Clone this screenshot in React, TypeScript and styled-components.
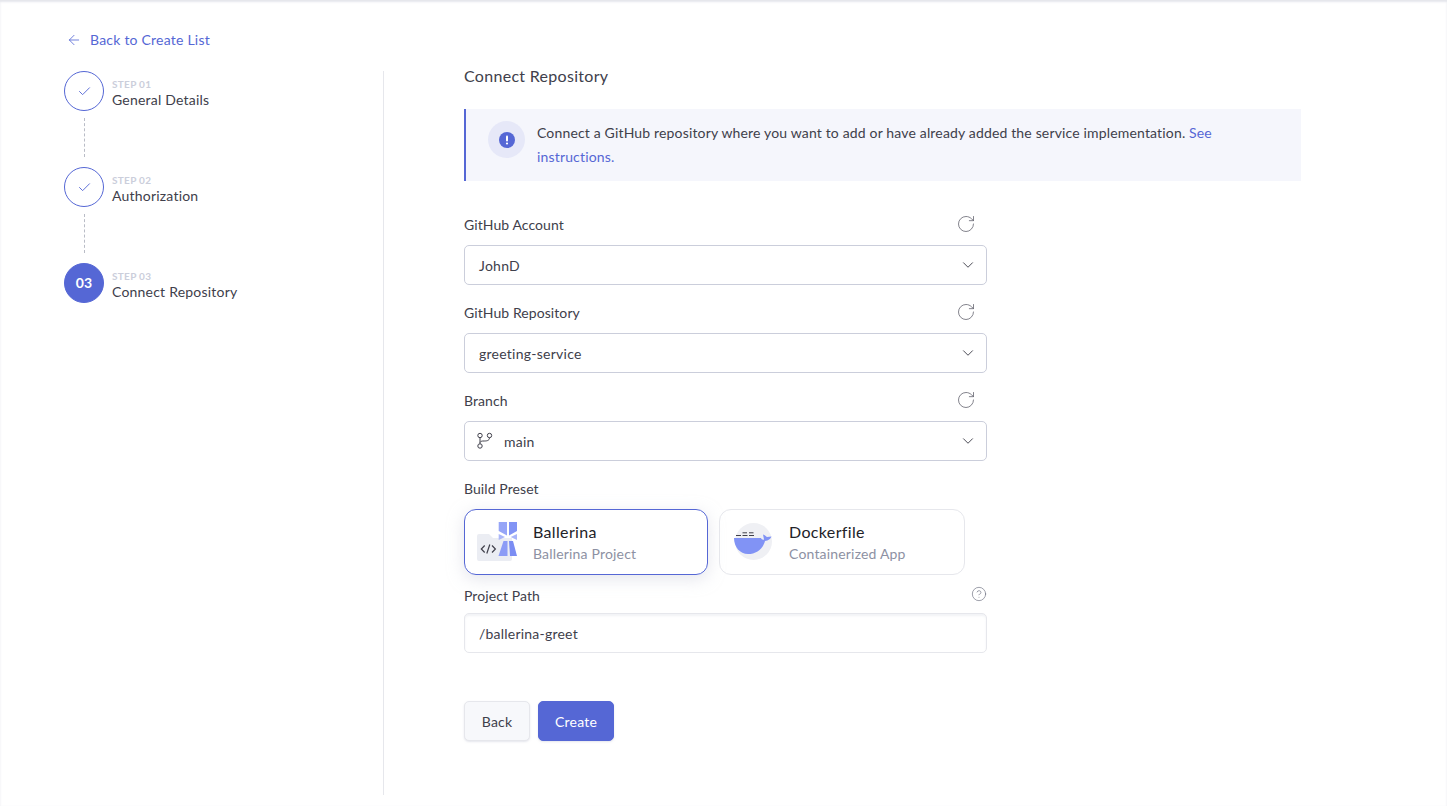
import React from 'react';
import styled, { createGlobalStyle } from 'styled-components';
import { ArrowLeft, Check, ChevronDown, RotateCw, CircleHelp } from 'lucide-react';

const GlobalStyle = createGlobalStyle`
  * { box-sizing: border-box; }
  html, body { margin: 0; padding: 0; background: #fff; }
  body {
    font-family: Lato, "Open Sans", "Liberation Sans", sans-serif;
    color: #40404b;
    height: 806px;
    overflow: hidden;
    letter-spacing: 0.18px;
  }
`;

const Page = styled.div`
  height: 806px;
  border-top: 1px solid #e6e7ec;
  box-shadow: inset 0 1px 2px rgba(203, 206, 219, 0.5);
  padding: 29px 0 11px 64px;
  display: flex;
  flex-direction: column;
`;

const BackLink = styled.a`
  display: flex;
  align-items: center;
  gap: 8px;
  height: 20px;
  margin: 0 0 21px 2px;
  color: #5567d5;
  font-size: 14px;
  letter-spacing: 0.22px;
`;

const BackText = styled.span`
  padding-bottom: 2px;
`;

const Columns = styled.div`
  flex: 1;
  display: flex;
`;

const Sidebar = styled.aside`
  width: 320px;
  border-right: 1px solid #e6e7ec;
`;

const Step = styled.div`
  display: flex;
  gap: 8px;
  height: 40px;
`;

const Circle = styled.div<{ $active?: boolean }>`
  width: 40px;
  height: 40px;
  padding-bottom: ${(p) => (p.$active ? 2 : 0)}px;
  border-radius: 50%;
  border: 1px solid #5567d5;
  background: ${(p) => (p.$active ? '#5567d5' : '#fff')};
  color: ${(p) => (p.$active ? '#fff' : '#5567d5')};
  font-size: 14px;
  font-weight: 700;
  display: flex;
  align-items: center;
  justify-content: center;
`;

const StepText = styled.div`
  padding-top: 6px;
`;

const StepNo = styled.div`
  font-size: 10px;
  line-height: 14px;
  font-weight: 700;
  letter-spacing: 0.3px;
  color: #cbcedb;
`;

const StepName = styled.div`
  font-size: 14px;
  line-height: 18px;
  letter-spacing: 0.21px;
`;

const Connector = styled.div`
  width: 0;
  height: 39px;
  margin: 7px 0 10px 20px;
  border-left: 1px dashed #b9bcc6;
`;

const Main = styled.main`
  padding-left: 80px;
  width: 917px;
`;

const Title = styled.h2`
  margin: -3px 0 26px;
  font-size: 16px;
  line-height: 15px;
  font-weight: 400;
  letter-spacing: 0.3px;
  color: #40404b;
`;

const Alert = styled.div`
  display: flex;
  gap: 12px;
  height: 72px;
  padding: 12px 60px 0 22px;
  margin-bottom: 33px;
  background: #f5f6fc;
  border-left: 2px solid #5567d5;
`;

const AlertBadge = styled.div`
  flex: none;
  width: 37px;
  height: 37px;
  border-radius: 50%;
  background: #e6e8f8;
  display: flex;
  align-items: center;
  justify-content: center;
`;

const AlertText = styled.p`
  margin: 0;
  font-size: 14px;
  line-height: 24px;
  letter-spacing: 0.16px;
`;

const TextLink = styled.a`
  color: #5567d5;
`;

const Form = styled.div`
  width: 523px;
`;

const LabelRow = styled.div`
  display: flex;
  align-items: center;
  justify-content: space-between;
  height: 20px;
  padding-right: 11px;
  font-size: 14px;
  letter-spacing: 0.08px;
`;

const Field = styled.div`
  margin-bottom: 17px;
`;

const Select = styled.div`
  height: 40px;
  margin-top: 11px;
  display: flex;
  align-items: center;
  gap: 11px;
  padding: 0 9px 0 14px;
  border: 1px solid #cbcedb;
  border-radius: 5px;
  font-size: 14px;
  letter-spacing: 0.25px;
`;

const SelectValue = styled.span`
  flex: 1;
`;

const BranchSvg = styled.svg`
  flex: none;
  margin-left: -2px;
`;

const Cards = styled.div`
  display: flex;
  gap: 11px;
  margin-top: 11px;
  margin-bottom: 11px;
`;

const Card = styled.div<{ $selected?: boolean; $width: number; $inset: number }>`
  width: ${(p) => p.$width}px;
  height: 66px;
  display: flex;
  align-items: center;
  gap: 14px;
  padding-left: ${(p) => p.$inset}px;
  border-radius: 12px;
  border: 1px solid ${(p) => (p.$selected ? '#5567d5' : '#e6e7ec')};
  box-shadow: ${(p) => (p.$selected ? '0 4px 16px rgba(203, 206, 219, 0.5)' : 'none')};
`;

const CardBody = styled.div`
  padding-top: 2px;
`;

const CardTitle = styled.div`
  font-size: 16px;
  line-height: 22px;
  letter-spacing: 0.35px;
  color: #222228;
`;

const CardSub = styled.div`
  font-size: 14px;
  line-height: 22px;
  color: #8d91a3;
`;

const InputLabelRow = styled(LabelRow)`
  padding-right: 0;
  height: 18px;
`;

const HelpIcon = styled(CircleHelp)`
  align-self: flex-start;
`;

const Input = styled.div`
  height: 40px;
  margin-top: 9px;
  display: flex;
  align-items: center;
  padding: 0 14px;
  border: 1px solid #e6e7ec;
  border-radius: 5px;
  box-shadow: inset 0 2px 2px rgba(203, 206, 219, 0.25);
  font-size: 14px;
  letter-spacing: 0.22px;
`;

const Actions = styled.div`
  display: flex;
  gap: 8px;
  margin-top: 48px;
`;

const Button = styled.button<{ $primary?: boolean }>`
  height: 40px;
  width: ${(p) => (p.$primary ? 76 : 66)}px;
  font-family: inherit;
  font-size: 14px;
  letter-spacing: 0.2px;
  border-radius: 5px;
  border: 1px solid ${(p) => (p.$primary ? '#5567d5' : '#e6e7ec')};
  background: ${(p) => (p.$primary ? '#5567d5' : '#f7f8fb')};
  color: ${(p) => (p.$primary ? '#fff' : '#40404b')};
  box-shadow: 0 1px 2px rgba(203, 206, 219, 0.5);
`;

const steps = [
  { no: 'STEP 01', name: 'General Details', done: true },
  { no: 'STEP 02', name: 'Authorization', done: true },
  { no: 'STEP 03', name: 'Connect Repository', done: false },
];

const BranchIcon = () => (
  <BranchSvg width="16" height="18" viewBox="0 0 16 18" fill="none" stroke="#40404b" strokeWidth="1">
    <circle cx="3" cy="3.5" r="2.2" />
    <circle cx="12.5" cy="3.5" r="2.2" />
    <circle cx="3" cy="14" r="2.2" />
    <path d="M3 5.7v6.100M3 10.5c1-1.500 2-1.500 4-1.500s5.500 0 5.500-3.300" />
  </BranchSvg>
);

const BallerinaLogo = () => (
  <svg width="42" height="42" viewBox="0 0 42 42" fill="none">
    <path d="M0 15a2 2 0 0 1 2-2h10l4 4h19v21a2 2 0 0 1-2 2H2a2 2 0 0 1-2-2z" fill="#ebedf3" />
    <path d="M21.7 1H30v13.500l-8.300-4.500z" fill="#96a5f7" />
    <path d="M32 1h8v9l-8 4.500z" fill="#8294f5" />
    <path d="M21.700 13l6.300 3-6.300 3z" fill="#aab6f9" />
    <path d="M40 13v6l-6.300-3z" fill="#aab6f9" />
    <path d="M26.500 20h4v15h-9z" fill="#8c9cf6" />
    <path d="M32 20h4l4 15h-7z" fill="#7b8df3" />
    <path d="M7.700 24.500L4.300 28l3.400 3.500M15 24.500l3.400 3.500-3.400 3.500M12.800 23.500l-3 9" stroke="#40404b" strokeWidth="1.200" />
  </svg>
);

const DockerLogo = () => (
  <svg width="42" height="42" viewBox="0 0 42 42" fill="none">
    <circle cx="20.500" cy="20.500" r="18.500" fill="#eff0f4" />
    <path
      d="M1 17h27c.5 1.500 2 2 3 1.500l-1-5c2 .5 3 2 4 2.500 1.500 0 3-.5 4.500-.5-1 2.500-3 4-6.500 4.500C30 28 23 33 15 33 7 33 1 26 1 17z"
      fill="#8193f5"
    />
    <path d="M3 14.500h5M9.500 14.500h5M16 14.500h5M9.500 11.800h4.500M16 11.800h4.500" stroke="#40404b" strokeWidth="1" />
  </svg>
);

const RefreshIcon = () => <RotateCw size={20} strokeWidth={0.9} color="#5a5a66" />;

const Chevron = () => <ChevronDown size={18} strokeWidth={1.25} />;

export default function App() {
  return (
    <>
      <GlobalStyle />
      <Page>
        <BackLink>
          <ArrowLeft size={16} strokeWidth={1.25} />
          <BackText>Back to Create List</BackText>
        </BackLink>
        <Columns>
          <Sidebar>
            {steps.map((step, idx) => (
              <React.Fragment key={step.no}>
                <Step>
                  <Circle $active={!step.done}>
                    {step.done ? <Check size={15} strokeWidth={1.5} /> : '03'}
                  </Circle>
                  <StepText>
                    <StepNo>{step.no}</StepNo>
                    <StepName>{step.name}</StepName>
                  </StepText>
                </Step>
                {idx < steps.length - 1 && <Connector />}
              </React.Fragment>
            ))}
          </Sidebar>
          <Main>
            <Title>Connect Repository</Title>
            <Alert>
              <AlertBadge>
                <svg width="16" height="16" viewBox="0 0 16 16">
                  <circle cx="8" cy="8" r="8" fill="#5567d5" />
                  <rect x="7" y="3.500" width="2" height="6" rx="1" fill="#fff" />
                  <circle cx="8" cy="11.500" r="1.100" fill="#fff" />
                </svg>
              </AlertBadge>
              <AlertText>
                Connect a GitHub repository where you want to add or have already added the service implementation.{' '}
                <TextLink>See instructions.</TextLink>
              </AlertText>
            </Alert>
            <Form>
              <Field>
                <LabelRow>
                  GitHub Account
                  <RefreshIcon />
                </LabelRow>
                <Select>
                  <SelectValue>JohnD</SelectValue>
                  <Chevron />
                </Select>
              </Field>
              <Field>
                <LabelRow>
                  GitHub Repository
                  <RefreshIcon />
                </LabelRow>
                <Select>
                  <SelectValue>greeting-service</SelectValue>
                  <Chevron />
                </Select>
              </Field>
              <Field>
                <LabelRow>
                  Branch
                  <RefreshIcon />
                </LabelRow>
                <Select>
                  <BranchIcon />
                  <SelectValue>main</SelectValue>
                  <Chevron />
                </Select>
              </Field>
              <LabelRow>Build Preset</LabelRow>
              <Cards>
                <Card $selected $width={244} $inset={12}>
                  <BallerinaLogo />
                  <CardBody>
                    <CardTitle>Ballerina</CardTitle>
                    <CardSub>Ballerina Project</CardSub>
                  </CardBody>
                </Card>
                <Card $width={246} $inset={13}>
                  <DockerLogo />
                  <CardBody>
                    <CardTitle>Dockerfile</CardTitle>
                    <CardSub>Containerized App</CardSub>
                  </CardBody>
                </Card>
              </Cards>
              <InputLabelRow>
                Project Path
                <HelpIcon size={16} strokeWidth={1} color="#6d7080" />
              </InputLabelRow>
              <Input>/ballerina-greet</Input>
              <Actions>
                <Button>Back</Button>
                <Button $primary>Create</Button>
              </Actions>
            </Form>
          </Main>
        </Columns>
      </Page>
    </>
  );
}
